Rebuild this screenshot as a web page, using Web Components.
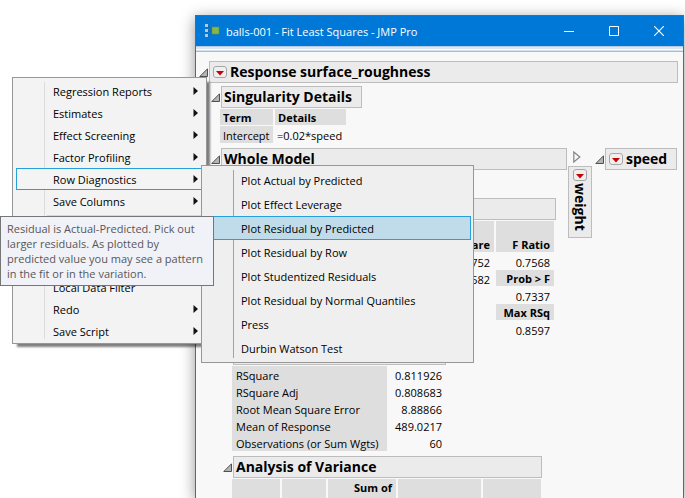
<!DOCTYPE html>
<html lang="en">
<head>
<meta charset="utf-8">
<title>balls-001 - Fit Least Squares - JMP Pro</title>
<style>
html, body { margin: 0; height: 100%; }
body { background: #fff; color: #000; font: 11px/17px "Open Sans", "Noto Sans", sans-serif; overflow: hidden; }
</style>
</head>
<body>
<jmp-desktop></jmp-desktop>
<script>
function define(name, html, setup) {
  const template = document.createElement('template');
  template.innerHTML = html;
  customElements.define(name, class extends HTMLElement {
    constructor() {
      super();
      this.attachShadow({ mode: 'open' }).append(template.content.cloneNode(true));
    }
    connectedCallback() { if (setup) setup(this, this.shadowRoot); }
  });
}

define('red-menu', `
<style>
:host { display: block; flex: none; width: 14px; height: 12px; }
button { display: block; width: 100%; height: 100%; padding: 0; border: 1px solid #a6a6a6; border-radius: 3px; background: #efefef; box-sizing: border-box; }
svg { display: block; margin: 3px auto 0; }
</style>
<button type="button" aria-label="Options"><svg width="8" height="5" viewBox="0 0 8 5"><path d="M0 0h8L4 4.5z" fill="#c80000"/></svg></button>`);

define('open-toggle', `
<style>
:host { display: block; flex: none; width: 10px; }
button { display: block; padding: 0; border: 0; background: none; }
svg { display: block; }
.shut { display: none; }
:host([shut]) .shut { display: block; }
:host([shut]) .open { display: none; }
</style>
<button type="button" aria-label="Show or hide">
<svg class="open" width="9" height="9" viewBox="0 0 9 9"><path d="M8.5 .8V8.5H.8z" fill="#b4b4b4" stroke="#505050"/></svg>
<svg class="shut" width="8" height="12" viewBox="0 0 8 12"><path d="M.8 1L6.8 6 .8 11z" fill="#f8f8f8" stroke="#858585" stroke-width="1.2"/></svg>
</button>`);

define('outline-box', `
<style>
:host { display: block; padding-left: 3px; margin-top: 3px; }
.head { display: flex; align-items: center; width: var(--head, auto); }
h2 { flex: 1; display: flex; align-items: center; gap: 3px; height: 22px; box-sizing: border-box; margin: 0; padding: 0 2px; border: 1px solid #bdbdbd; background: #ebebeb; font-size: 14px; line-height: 20px; font-weight: bold; white-space: nowrap; }
:host([menu]) h2 { padding-left: 3px; }
:host(:not([menu])) red-menu { display: none; }
.body { display: flow-root; padding: 1px 0 0 9px; margin-top: -1px; }
::slotted(report-table) { margin: 1px 0 2px; }
</style>
<div class="head"><open-toggle></open-toggle><h2><red-menu></red-menu><span></span></h2></div>
<div class="body"><slot></slot></div>`,
(el, root) => { root.querySelector('span').textContent = el.getAttribute('heading') || ''; });

define('side-outline', `
<style>
:host { display: flex; flex-direction: column; width: 24px; padding-left: 1px; margin-top: 3px; }
open-toggle { padding: 3px 0 3px 5px; }
h2 { display: flex; flex-direction: column; align-items: center; gap: 2px; height: 72px; box-sizing: border-box; margin: 0; padding: 2px 0; border: 1px solid #bdbdbd; background: #ebebeb; font-size: 14px; line-height: 20px; }
span { writing-mode: vertical-rl; }
</style>
<open-toggle shut></open-toggle>
<h2><red-menu></red-menu><span><slot></slot></span></h2>`);

const cellCss = `
:host { display: block; }
table { border-collapse: separate; border-spacing: 0; white-space: nowrap; table-layout: fixed; }
th, td { height: 17px; box-sizing: border-box; padding: 2px 4px 0; line-height: 15px; text-align: left; font-weight: normal; }
td { padding-left: 2px; }
th { background: #dedede; }
th[scope=col] { font-weight: bold; padding: 1px 4px 0 3px; border-bottom: 1px solid #f8f8f8; border-right: 2px solid #f8f8f8; }
.num td { border-right: 2px solid transparent; }
.num th[scope=col], td.r { text-align: right; }
.tall th { height: 32px; vertical-align: bottom; }
`;
const tables = {
  singular: `<table style="width:128px"><colgroup><col style="width:55px"><col></colgroup>
<tr><th scope="col">Term</th><th scope="col">Details</th></tr>
<tr><th scope="row" style="padding-left:3px;border-right:2px solid #f8f8f8">Intercept</th><td>=0.02*speed</td></tr></table>`,
  lack: `<table class="num" style="width:324px"><colgroup><col style="width:202px"><col style="width:62px"><col></colgroup>
<tr class="tall"><th scope="col"></th><th scope="col">Square</th><th scope="col">F Ratio</th></tr>
<tr><td></td><td class="r">752</td><td class="r">0.7568</td></tr>
<tr><td></td><td class="r">582</td><th scope="col">Prob &gt; F</th></tr>
<tr><td></td><td></td><td class="r">0.7337</td></tr>
<tr><td></td><td></td><th scope="col">Max RSq</th></tr>
<tr><td></td><td></td><td class="r">0.8597</td></tr></table>`,
  summary: `<table style="width:214px"><colgroup><col style="width:155px"><col></colgroup>
${[['RSquare', '0.811926'], ['RSquare Adj', '0.808683'], ['Root Mean Square Error', '8.88866'], ['Mean of Response', '489.0217'], ['Observations (or Sum Wgts)', '60']]
    .map(([a, b]) => `<tr><th scope="row">${a}</th><td class="r">${b}</td></tr>`).join('')}</table>`,
  anova: `<table class="num" style="width:311px"><colgroup><col style="width:50px"><col style="width:46px"><col style="width:70px"><col style="width:85px"><col></colgroup>
<tr class="tall"><th scope="col"></th><th scope="col"></th><th scope="col" style="vertical-align:top">Sum of</th><th scope="col"></th><th scope="col"></th></tr></table>`
};
define('report-table', `<style>${cellCss}</style><div></div>`,
(el, root) => { root.querySelector('div').innerHTML = tables[el.getAttribute('name')]; });

define('app-window', `
<style>
:host { display: flex; flex-direction: column; box-sizing: border-box; border: 1px solid #1a78c8; border-bottom: 0; background: #f8f8f8; box-shadow: 0 3px 14px rgba(0,0,0,.42); }
header { flex: none; display: flex; align-items: center; height: 30px; background: #0078d7; color: #fff; padding: 0 2px 0 9px; }
h1 { flex: 1; margin: 0 0 0 6px; font-size: 11px; font-weight: normal; white-space: nowrap; }
header button { width: 45px; height: 30px; padding: 0; border: 0; background: none; display: grid; place-items: center; }
.strip { flex: none; height: 6px; background: linear-gradient(#b7cbe0 0 1px, #dce6f1 1px 3px, #fafcfe 3px 4px, #d5e0ed 4px 5px, #a5bdd8 5px); }
main { flex: 1; min-height: 0; overflow: hidden; padding: 6px 5px 0 0; }
</style>
<header>
<svg width="15" height="14" viewBox="0 0 15 14"><path d="M3 2l5 4M3 7h5M3 12l5-4" stroke="#2f5d86" fill="none"/><path d="M0 0h3v3H0zM0 5h3v3H0zM0 10h3v3H0z" fill="#b4c8d8"/><rect x="7" y="3" width="7" height="7" fill="#83b84c" stroke="#668d48" stroke-width=".6"/></svg>
<h1>balls-001 - Fit Least Squares - JMP Pro</h1>
<button type="button" aria-label="Minimize"><svg width="10" height="10"><path d="M0 5.500h10" stroke="#fff"/></svg></button>
<button type="button" aria-label="Maximize"><svg width="10" height="10"><path d="M.5.5h9v9h-9z" fill="none" stroke="#fff"/></svg></button>
<button type="button" aria-label="Close"><svg width="10" height="10"><path d="M0 0l10 10M10 0L0 10" stroke="#fff" stroke-width="1.100"/></svg></button>
</header>
<div class="strip"></div>
<main><slot></slot></main>`);

define('menu-row', `
<style>
:host { display: block; }
button { display: flex; align-items: center; justify-content: space-between; width: 100%; height: var(--row); box-sizing: border-box; padding: 0 5px 0 36px; border: 1px solid transparent; background: none; color: #000; font: inherit; text-align: left; white-space: nowrap; }
:host([current]) button { border-color: #26a0da; background: var(--current); }
svg { display: none; }
:host([more]) svg { display: block; }
</style>
<button type="button"><span><slot></slot></span><svg width="5" height="8" viewBox="0 0 5 8"><path d="M.5 0L5 4 .5 8z" fill="#111"/></svg></button>`);

define('popup-menu', `
<style>
:host { display: block; box-sizing: border-box; border: 1px solid #979797; background: linear-gradient(90deg, transparent 31px, var(--line) 31px 32px, transparent 32px) 0 4px / 100% calc(100% - 8px) no-repeat, var(--face); padding: 2px; }
</style>
<slot></slot>`);

define('tool-tip', `
<style>
:host { display: block; box-sizing: border-box; border: 1px solid #767676; background: #f1f2f7; color: #575757; padding: 4px 6px; line-height: 15px; white-space: nowrap; }
</style>
<slot></slot>`);

define('jmp-desktop', `
<style>
:host { display: block; position: relative; height: 100vh; overflow: hidden; }
app-window { position: absolute; left: 195px; right: 1px; top: 15px; bottom: 0; }
.models { display: flex; align-items: flex-start; }
.whole { flex: 0 0 356px; }
.speed { flex: 0 0 82px; }
.main-menu { position: absolute; left: 12px; top: 77px; width: 195px; padding: 2px 2px 1px 3px; --row: 22px; --face: #f3f3f3; --line: #dcdcdc; --current: #f4f4f4; box-shadow: 4px 4px 2px -1px rgba(0,0,0,.5); }
.sub-menu { position: absolute; left: 201px; top: 165px; width: 273px; --row: 24px; --face: #efefef; --line: #a0a0a0; --current: #c0dcea; }
.main-menu hr { height: 1px; margin: 3px 2px 60px 31px; border: 0; background: #d7d7d7; }
tool-tip { position: absolute; left: 0; top: 216px; width: 214px; }
</style>
<app-window>
  <outline-box menu heading="Response surface_roughness">
    <outline-box heading="Singularity Details" style="--head:151px"><report-table name="singular"></report-table></outline-box>
    <div class="models">
      <outline-box class="whole" heading="Whole Model">
        <outline-box style="--head:200px"></outline-box>
        <outline-box style="--head:333px"><report-table name="lack"></report-table></outline-box>
        <outline-box style="--head:223px"><report-table name="summary"></report-table></outline-box>
        <outline-box heading="Analysis of Variance" style="--head:319px"><report-table name="anova"></report-table></outline-box>
      </outline-box>
      <side-outline>weight</side-outline>
      <outline-box class="speed" menu heading="speed"></outline-box>
    </div>
  </outline-box>
</app-window>
<popup-menu class="main-menu">
  <menu-row more>Regression Reports</menu-row>
  <menu-row more>Estimates</menu-row>
  <menu-row more>Effect Screening</menu-row>
  <menu-row more>Factor Profiling</menu-row>
  <menu-row more current>Row Diagnostics</menu-row>
  <menu-row more>Save Columns</menu-row>
  <hr>
  <menu-row>Local Data Filter</menu-row>
  <menu-row more>Redo</menu-row>
  <menu-row more>Save Script</menu-row>
</popup-menu>
<popup-menu class="sub-menu">
  <menu-row>Plot Actual by Predicted</menu-row>
  <menu-row>Plot Effect Leverage</menu-row>
  <menu-row current>Plot Residual by Predicted</menu-row>
  <menu-row>Plot Residual by Row</menu-row>
  <menu-row>Plot Studentized Residuals</menu-row>
  <menu-row>Plot Residual by Normal Quantiles</menu-row>
  <menu-row>Press</menu-row>
  <menu-row>Durbin Watson Test</menu-row>
</popup-menu>
<tool-tip>Residual is Actual-Predicted. Pick out<br>larger residuals. As plotted by<br>predicted value you may see a pattern<br>in the fit or in the variation.</tool-tip>`);
</script>
</body>
</html>
